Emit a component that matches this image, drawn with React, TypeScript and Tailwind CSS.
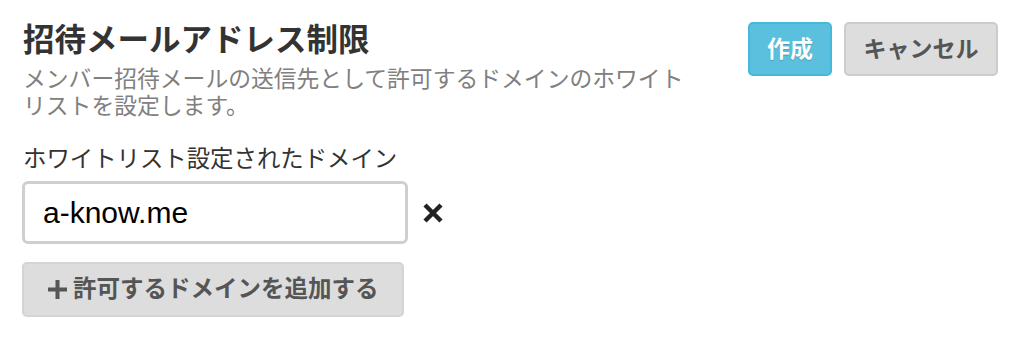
import { useState } from 'react';

export default function App() {
    const [domains, setDomains] = useState(['a-know.me']);

    return (
        <div className="min-h-[337px] bg-white font-['Liberation_Sans','Noto_Sans_CJK_JP',sans-serif] text-[#333]">
            <div className="flex justify-between pl-[22px] pr-[26px] pt-[22px]">
                <div className="w-[680px]">
                    <h1 className="pl-[1px] text-[31.5px] font-bold leading-[36px]">招待メールアドレス制限</h1>
                    <p className="mt-[8px] pl-[1px] text-[22.8px] leading-[27px] text-[#808080]">
                        メンバー招待メールの送信先として許可するドメインのホワイトリストを設定します。
                    </p>

                    <div className="mt-[26px]">
                        <label className="block pl-[1px] text-[23.4px] leading-[27px]">ホワイトリスト設定されたドメイン</label>
                        {domains.map((domain, i) => (
                            <div key={i} className="mt-[8px] flex items-center gap-[13px]">
                                <input
                                    type="text"
                                    value={domain}
                                    onChange={(e) => setDomains(domains.map((d, j) => (j === i ? e.target.value : d)))}
                                    className="h-[63px] w-[386px] rounded-[6px] border-[3px] border-[#cfcfcf] bg-white px-[18px] text-[30px] text-black outline-none"
                                />
                                <button
                                    onClick={() => setDomains(domains.filter((_, j) => j !== i))}
                                    className="flex h-[24px] w-[24px] items-center justify-center"
                                >
                                    <svg width="22" height="22" viewBox="0 0 22 22">
                                        <path d="M3 3 L19 19 M19 3 L3 19" stroke="#222" strokeWidth="4.5" />
                                    </svg>
                                </button>
                            </div>
                        ))}
                        <button
                            onClick={() => setDomains([...domains, ''])}
                            className="mt-[18px] flex h-[55px] w-[382px] items-center rounded-[5px] border-[2px] border-[#d4d4d4] bg-[#dddddd] pl-[23px] text-[23.5px] font-bold text-[#555]"
                        >
                            <svg width="21" height="21" viewBox="0 0 21 21" className="mr-[5px]">
                                <path d="M10.5 1 V20 M1 10.5 H20" stroke="#555" strokeWidth="4" />
                            </svg>
                            許可するドメインを追加する
                        </button>
                    </div>
                </div>

                <div className="flex gap-[12px]">
                    <button className="h-[54px] w-[84px] rounded-[5px] border-[2px] border-[#46b8da] bg-[#5bc0de] text-[23px] font-bold text-white [text-shadow:0_1px_1px_rgba(0,0,0,0.2)]">
                        作成
                    </button>
                    <button className="h-[54px] w-[154px] rounded-[5px] border-[2px] border-[#cccccc] bg-[#dddddd] text-[23px] font-bold text-[#555]">
                        キャンセル
                    </button>
                </div>
            </div>
        </div>
    );
}
